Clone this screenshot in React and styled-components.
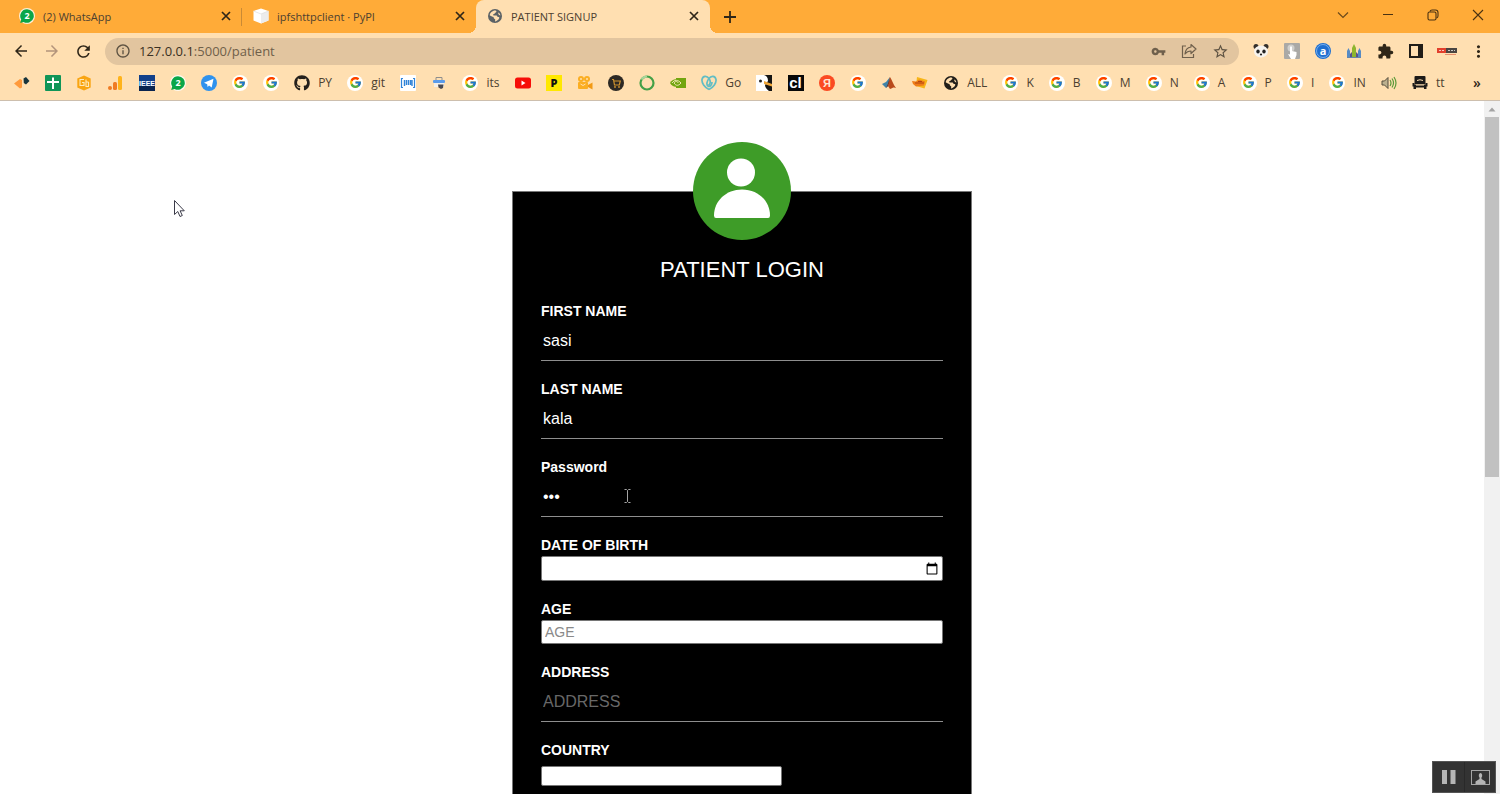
import React from 'react';
import styled, { createGlobalStyle, css } from 'styled-components';
import { FcGoogle } from 'react-icons/fc';
import { FaGithub } from 'react-icons/fa';
import {
  MdArrowBack, MdArrowForward, MdRefresh, MdInfoOutline, MdVpnKey, MdStarBorder,
  MdExtension, MdMoreVert,
} from 'react-icons/md';

const GlobalStyle = createGlobalStyle`
  * { box-sizing: border-box; }
  html, body { margin: 0; background: #fff; overflow: hidden; }
  button { border: 0; padding: 0; margin: 0; background: none; font: inherit; color: inherit; }
`;

const Browser = styled.div`
  display: flex;
  flex-direction: column;
  height: 100vh;
  overflow: hidden;
  font-family: "Open Sans", "Noto Sans", sans-serif;
  font-size: 11px;
  color: #4c4030;
`;

/* Tab strip */
const TabStrip = styled.header`
  display: flex;
  flex: none;
  height: 33px;
  padding-left: 8px;
  background: #ffab38;
`;
const Tab = styled.div`
  position: relative;
  display: flex;
  align-items: center;
  gap: 8px;
  flex: 0 1 234px;
  min-width: 0;
  padding: 0 8px 1px 11px;
  ${(p) => p.$divider && css`
    &::after {
      content: '';
      position: absolute;
      right: 0;
      top: 8px;
      height: 18px;
      border-right: 1px solid #c98a35;
    }
  `}
  ${(p) => p.$active && css`
    background: #ffdfb1;
    border-radius: 8px 8px 0 0;
    &::before, &::after {
      content: '';
      position: absolute;
      bottom: 0;
      width: 8px;
      height: 8px;
    }
    &::before {
      left: -8px;
      background: radial-gradient(circle at 0 0, transparent 8px, #ffdfb1 8px);
    }
    &::after {
      right: -8px;
      background: radial-gradient(circle at 100% 0, transparent 8px, #ffdfb1 8px);
    }
  `}
`;
const TabTitle = styled.span`
  flex: 1;
  overflow: hidden;
  white-space: nowrap;
  text-overflow: ellipsis;
`;
const IconButton = styled.button`
  display: grid;
  place-items: center;
  flex: none;
  width: ${(p) => p.$w || 16}px;
  height: ${(p) => p.$h || 16}px;
  color: ${(p) => p.$color || '#2f2618'};
`;
const NewTab = styled.div`
  display: flex;
  align-items: center;
  flex: 1;
  padding-left: 12px;
`;
const WindowButtons = styled.div`
  display: flex;
  align-items: center;
  height: 30px;
`;

/* Address bar */
const Toolbar = styled.div`
  display: flex;
  align-items: center;
  gap: 12px;
  flex: none;
  height: 35px;
  padding: 1px 12px 0 11px;
  background: #ffdfb1;
`;
const ToolGroup = styled.div`
  display: flex;
  align-items: center;
  gap: 11px;
`;
const AddressBar = styled.div`
  display: flex;
  align-items: center;
  gap: 8px;
  flex: 1;
  min-width: 0;
  height: 27px;
  padding: 0 9px 0 10px;
  border-radius: 14px;
  background: #e2c59f;
`;
const Url = styled.div`
  flex: 1;
  font-size: 13px;
  color: #6f604a;
  white-space: nowrap;
`;
const Host = styled.span`
  color: #3a3023;
`;

/* Bookmarks */
const BookmarkBar = styled.nav`
  display: flex;
  align-items: center;
  flex: none;
  height: 33px;
  padding: 0 16px 3px 14px;
  background: #ffdfb1;
  border-bottom: 1px solid #cdbfae;
`;
const BookmarkList = styled.div`
  display: flex;
  align-items: center;
  justify-content: space-between;
  flex: 1;
  padding-right: 25px;
`;
const Bookmark = styled.a`
  display: flex;
  align-items: center;
  gap: 8px;
  height: 16px;
  font-size: 12px;
  line-height: 16px;
  color: #4c4030;
  text-decoration: none;
  white-space: nowrap;
`;
const More = styled.button`
  width: 14px;
  font-size: 14px;
  font-weight: 600;
  line-height: 16px;
  color: #2f2618;
`;
const GoogleDisc = styled.span`
  display: grid;
  place-items: center;
  width: 16px;
  height: 16px;
  border-radius: 50%;
  background: #fff;
`;
const Art = styled.svg`
  display: block;
  flex: none;
  width: ${(p) => p.$s || 16}px;
  height: ${(p) => p.$s || 16}px;
`;

/* Page */
const Viewport = styled.div`
  display: flex;
  flex: 1;
  min-height: 0;
`;
const Page = styled.main`
  position: relative;
  flex: 1;
  overflow: hidden;
  padding-top: 90px;
  font-family: "Liberation Sans", Arial, sans-serif;
`;
const Card = styled.form`
  display: flex;
  flex-direction: column;
  gap: 20px;
  max-width: 460px;
  margin: 0 auto;
  padding: 0 28px 28px;
  border: 1px solid #777;
  background: #000;
  color: #fff;
`;
const CardHead = styled.div`
  display: flex;
  flex-direction: column;
  align-items: center;
  gap: 17px;
  margin-top: -50px;
`;
const Heading = styled.h1`
  margin: 0;
  font-size: 22px;
  line-height: 26px;
  font-weight: 400;
`;
const Field = styled.div`
  position: relative;
  display: flex;
  flex-direction: column;
`;
const Label = styled.label`
  font-size: 14px;
  line-height: 17px;
  font-weight: 700;
`;
const LineInput = styled.input`
  height: 41px;
  padding: 2px 2px 0;
  border: 0;
  border-bottom: 1px solid #8e8e8e;
  border-radius: 0;
  outline: 0;
  background: transparent;
  color: #fff;
  font: 16px "Liberation Sans", Arial, sans-serif;
  &::placeholder { color: #686868; }
`;
const BoxInput = styled.input`
  width: ${(p) => p.$w || '100%'};
  height: ${(p) => p.$h || 24}px;
  margin-top: ${(p) => p.$top || 2}px;
  padding: 1px 1px 1px 3px;
  border: 1px solid #767676;
  border-radius: 2px;
  outline: 0;
  background: #fff;
  color: #000;
  font: 14px "Liberation Sans", Arial, sans-serif;
  &::placeholder { color: #8a8a8a; }
  &::-webkit-datetime-edit { visibility: hidden; }
`;
const Scrollbar = styled.div`
  display: flex;
  flex-direction: column;
  align-items: center;
  flex: none;
  width: 16px;
  background: #f1f1f1;
`;
const Thumb = styled.div`
  width: 14px;
  height: 52%;
  background: #c1c1c1;
`;
const TextCursor = styled.svg`
  position: absolute;
  left: 83px;
  top: 30px;
  width: 7px;
  height: 14px;
`;
const Pointer = styled.svg`
  position: absolute;
  left: 173px;
  top: 98px;
  width: 12px;
  height: 19px;
`;
const Recorder = styled.div`
  position: fixed;
  right: 4px;
  bottom: 1px;
  display: grid;
  grid-template-columns: 1fr 1fr;
  width: 64px;
  height: 32px;
  border: 1px solid #555;
  background: #333;
`;
const RecorderButton = styled.button`
  display: grid;
  place-items: center;
  & + & { border-left: 1px solid #292929; }
`;

const Google = () => <GoogleDisc><FcGoogle size={13} /></GoogleDisc>;
const WhatsApp = () => (
  <Art viewBox="0 0 16 16">
    <circle cx="8" cy="8" r="8" fill="#fff" opacity=".8" />
    <path d="M8 1.2a6.8 6.8 0 1 1-3.4 12.7L1.2 15l1-3.5A6.8 6.8 0 0 1 8 1.2z" fill="#0aa648" />
    <text x="8" y="11.2" fontSize="9" fontWeight="700" fill="#fff" textAnchor="middle" fontFamily="Open Sans">2</text>
  </Art>
);
const Globe = ({ color, land }) => (
  <Art viewBox="0 0 16 16">
    <circle cx="8" cy="8" r="7" fill={color} />
    <path d="M8.500 2.500c1.500.5 1 1.800-.2 2.200-1 .4-.5 1.500-1.800 1.600-.8.200-.5 1.200.3 1.200h2.700c.8.200.6 1.500 1.500 1.600.9.100 1.600.2 1.200 1.200-.8 1.700-2.300 2.800-4 3.100-.6-.4.6-1.600-.2-2.200-1-.5-1.500-1-1.400-2.200-1.300-.2-3.200-1.200-3.900-1.700C2.900 5 5.500 2.300 8.500 2.500z" fill={land} />
    <path d="M11.500 4.500c1 .8 1.600 1.700 1.900 3-.9-.1-1.600-.7-2-1.500-.2-.6-.2-1 .1-1.500z" fill={land} />
  </Art>
);
const Close = () => (
  <Art viewBox="0 0 10 10" $s={10}><path d="m1 1 8 8M9 1 1 9" stroke="currentColor" strokeWidth="1.700" /></Art>
);

const art = {
  arrows: (
    <Art viewBox="0 0 16 16"><path d="M0 8.500 6 4l2 1v7.500l-2 1z" fill="#ff9a3c" /><path d="M9.500 3.500 12 2l3.500 4L12 9.500 9.800 8z" fill="#17343c" /></Art>
  ),
  sheet: (
    <Art viewBox="0 0 16 16"><rect width="16" height="16" rx="1" fill="#0f9558" /><path d="M7 2.500h2V6h5v2H9v6H7V8H2V6h5z" fill="#fff" /></Art>
  ),
  hexagon: (
    <Art viewBox="0 0 16 16"><path d="M8 .5 14.700 3.500v9L8 15.500l-6.700-3v-9z" fill="#f9a513" /><path d="M8 4.500H4v6h4V7.500H6M12.500 7H10V4.500M10 7v4.500h2.500V7" fill="none" stroke="#ffe9b8" strokeWidth="1.100" /></Art>
  ),
  analytics: (
    <Art viewBox="0 0 16 16"><circle cx="3" cy="13" r="2" fill="#f07b22" /><rect x="6" y="7" width="4" height="8" rx="1.500" fill="#f07b22" /><rect x="11" y="1" width="4" height="14" rx="1.500" fill="#ffb31a" /></Art>
  ),
  ieee: (
    <Art viewBox="0 0 16 16"><rect width="16" height="16" fill="#12408a" /><rect y="11" width="16" height="5" fill="#0a2450" /><text x="8" y="11" fontSize="7" fontWeight="700" fill="#fff" textAnchor="middle" fontFamily="Liberation Sans">IEEE</text></Art>
  ),
  whatsapp: <WhatsApp />,
  telegram: (
    <Art viewBox="0 0 16 16"><circle cx="8" cy="8" r="8" fill="#2f92ee" /><path d="m3 7.800 9.500-4-1.800 8.700-2.700-2-1.400 1.400-.4-2.600z" fill="#fff" /></Art>
  ),
  github: <FaGithub size={16} color="#24201c" />,
  barcode: (
    <Art viewBox="0 0 16 16"><rect width="16" height="16" rx="1" fill="#fff" /><path d="M3 3.500H1.500v9H3M13 3.500h1.500v9H13" fill="none" stroke="#3184d8" strokeWidth="1.200" /><path d="M4.500 5v6M6.500 5v5M8.500 5v5M10.500 5v5M12 5v6" fill="none" stroke="#3184d8" strokeWidth="1.400" /></Art>
  ),
  printer: (
    <Art viewBox="0 0 16 16"><path d="M5 5V2.500h6V5" fill="none" stroke="#8d8d8d" /><rect x="2" y="5" width="12" height="3" rx="1" fill="#5b9bea" /><path d="M3 8h10v4H3z" fill="#f3efe9" /><path d="M7 9.500h5.500L12 13l-2 1-2.500-1.500z" fill="#4a4a52" /></Art>
  ),
  youtube: (
    <Art viewBox="0 0 16 16"><rect y="2.500" width="16" height="11" rx="2.500" fill="#f60d08" /><path d="M6.500 5.500v5l4-2.500z" fill="#fff" /></Art>
  ),
  p: (
    <Art viewBox="0 0 16 16"><rect width="16" height="16" fill="#ffe800" /><text x="8" y="12" fontSize="11" fontWeight="800" fill="#111" textAnchor="middle" fontFamily="Open Sans">P</text></Art>
  ),
  camera: (
    <Art viewBox="0 0 16 16"><circle cx="4" cy="4" r="3" fill="#fbae22" /><circle cx="10" cy="4" r="3" fill="#fbae22" /><rect x="1" y="7" width="10" height="7" rx="1" fill="#fbae22" /><path d="m11 10 4.500-2.500v7L11 12z" fill="#f29a15" /><circle cx="4" cy="4" r="1" fill="#ffdfb1" /><circle cx="10" cy="4" r="1" fill="#ffdfb1" /><path d="M3.500 9q2.500 3 5 0" fill="none" stroke="#ffdfb1" /></Art>
  ),
  cart: (
    <Art viewBox="0 0 16 16"><circle cx="8" cy="8" r="8" fill="#2d2924" /><path d="M4 4.500h1.500l1 5.500h4.800l1-4H6" fill="none" stroke="#cf932f" strokeWidth="1.200" /><circle cx="7" cy="12" r=".9" fill="#cf932f" /><circle cx="11" cy="12" r=".9" fill="#cf932f" /></Art>
  ),
  ring: (
    <Art viewBox="0 0 16 16"><circle cx="8" cy="8" r="6.500" fill="none" stroke="#43a047" strokeWidth="2.200" /><path d="M8 1.500A6.500 6.500 0 0 0 2.500 4.500" stroke="#a8d59a" strokeWidth="2" fill="none" /></Art>
  ),
  nvidia: (
    <Art viewBox="0 0 16 16"><path d="M6 3h10v10H6z" fill="#72a510" /><path d="M0 8c3-5 8-5 11 0-3 5-8 5-11 0z" fill="#72a510" /><path d="M2 8c2.500-3.500 6-3.500 9 0-2.500 3-5 3-7 0 1.500-2 3-2 4.500 0" fill="none" stroke="#f3e9b5" strokeWidth="1" /></Art>
  ),
  godaddy: (
    <Art viewBox="0 0 16 16"><g fill="none" stroke="#62bdc4" strokeWidth="1.700"><path d="M8 14.500C3.500 12.500.5 8 1 4.500 1.800.5 6 .5 8 3.500c2 2.500 1.500 5.500-.5 7" /><path d="M8 14.500c4.500-2 7.500-6.500 7-10C14.200.5 10 .5 8 3.500c-2 2.500-3 6-1 7.500s4-1 4-4" /></g></Art>
  ),
  bird: (
    <Art viewBox="0 0 16 16"><rect width="16" height="16" fill="#151515" /><path d="M0 0h8q4 1 4 6l-3 4q0 3 4 6H0z" fill="#fff" /><path d="m8 6 8 3v2.500L8 9z" fill="#efa638" /><circle cx="4.500" cy="6" r="1.500" fill="#222" /></Art>
  ),
  cl: (
    <Art viewBox="0 0 16 16"><rect width="16" height="16" fill="#080808" /><text x="7.500" y="13" fontSize="15" fontWeight="700" fill="#fff" textAnchor="middle" fontFamily="Liberation Sans">cl</text></Art>
  ),
  yandex: (
    <Art viewBox="0 0 16 16"><circle cx="8" cy="8" r="8" fill="#fb4a22" /><text x="8" y="12" fontSize="11" fontWeight="700" fill="#ffe5d5" textAnchor="middle" fontFamily="Liberation Sans">Я</text></Art>
  ),
  matlab: (
    <Art viewBox="0 0 16 16"><path d="m1 9 4-2 4-5-2 9-2 2z" fill="#3f83a8" /><path d="M9 2c2 3 3.500 8 6 11-2-1-3-.5-6 1l-2-3z" fill="#b94a1c" /><path d="M9 2 8 8l-1 3-2 2c2-3 2.500-7 4-11z" fill="#6b2b20" /></Art>
  ),
  ticket: (
    <Art viewBox="0 0 16 16"><path d="m5 2 10.500 3-3 8.500L4 11z" fill="#f7b518" /><path d="m0 6 4 .5 3-2 6 2-1 4-8 1-3-2.500z" fill="#f07d17" /><path d="M3 8h9M6 6.500h4" stroke="#b34511" strokeWidth="1" /></Art>
  ),
  globe: <Globe color="#211e1a" land="#ffdfb1" />,
  speaker: (
    <Art viewBox="0 0 16 16"><path d="M1 6h2.500L7 2.500v11L3.500 10H1z" fill="#bbb08f" stroke="#554c3c" strokeWidth="1" /><path d="M9 5q2 3 0 6M11 3.500q3 4.500 0 9M13 2q4 6 0 12" fill="none" stroke="#5b9a3a" strokeWidth="1.200" /></Art>
  ),
  train: (
    <Art viewBox="0 0 16 16"><path d="M3.500 1h9q1 0 1 1v7h-11V2q0-1 1-1z" fill="#1c1a18" /><path d="M5 5.500q3-1.500 6 0" fill="none" stroke="#ffdfb1" strokeWidth="1" /><path d="M.5 8h2v1.500h11V8h2v3.500h-1V14H12v-1.500H4V14H1.500v-2.500h-1z" fill="#1c1a18" /><path d="M4 10h8" stroke="#ffdfb1" strokeWidth="1" /></Art>
  ),
  google: <Google />,
};

const bookmarks = [
  ['arrows'], ['sheet'], ['hexagon'], ['analytics'], ['ieee'], ['whatsapp'], ['telegram'],
  ['google'], ['google'], ['github', 'PY'], ['google', 'git'], ['barcode'], ['printer'],
  ['google', 'its'], ['youtube'], ['p'], ['camera'], ['cart'], ['ring'], ['nvidia'],
  ['godaddy', 'Go'], ['bird'], ['cl'], ['yandex'], ['google'], ['matlab'], ['ticket'],
  ['globe', 'ALL'], ['google', 'K'], ['google', 'B'], ['google', 'M'], ['google', 'N'],
  ['google', 'A'], ['google', 'P'], ['google', 'I'], ['google', 'IN'], ['speaker'], ['train', 'tt'],
];

const Cube = () => (
  <Art viewBox="0 0 16 16"><path d="M8 .5 15.500 3v9.500L8 15.500.5 12.500V3z" fill="#fff" /><path d="M8 6v9.500l7.500-3V3z" fill="#ececec" /><path d="M.5 3 8 6l7.500-3" fill="none" stroke="#ddd" strokeWidth=".7" /></Art>
);
const Share = () => (
  <Art viewBox="0 0 16 16"><path d="M5 3H1.500v11.500h11V11" fill="none" stroke="#6f604c" strokeWidth="1.200" /><path d="M10 1.500 15 6l-5 4.500V8C7.500 8 5.500 9 4 11c.3-4 2.500-6.500 6-7z" fill="none" stroke="#6f604c" strokeWidth="1.200" strokeLinejoin="round" /></Art>
);

const extensions = [
  ['Panda', <Art viewBox="0 0 16 16"><circle cx="3" cy="3.500" r="2.500" fill="#332f2b" /><circle cx="13" cy="3.500" r="2.500" fill="#332f2b" /><ellipse cx="8" cy="8.500" rx="7" ry="6" fill="#f6f3ee" /><ellipse cx="5" cy="8.500" rx="1.700" ry="2" fill="#222" /><ellipse cx="11" cy="8.500" rx="1.700" ry="2" fill="#222" /><circle cx="8" cy="11.500" r="1.100" fill="#222" /></Art>],
  ['Touch', <Art viewBox="0 0 16 16"><rect width="16" height="16" rx="1" fill="#aaa9a6" /><circle cx="7" cy="5" r="3.500" fill="#d1d0cd" /><path d="M6 4q1-1.500 2 0v4l4.500 1v3l-1.500 4H7l-3-5 2 .5z" fill="#fff" /></Art>],
  ['Alpha', <Art viewBox="0 0 16 16"><circle cx="8" cy="8" r="8" fill="#1f6fd0" /><circle cx="8" cy="8" r="6.500" fill="none" stroke="#8fc0f4" strokeWidth=".8" /><text x="8" y="11.500" fontSize="11" fontWeight="700" fill="#fff" textAnchor="middle" fontFamily="Open Sans">a</text></Art>],
  ['Towers', <Art viewBox="0 0 16 16"><path d="M1 14V8l1.500-3L4 8v6zM12 14V8l1.500-3L15 8v6z" fill="#568bc4" /><path d="M6 14V5l2-4 2 4v9z" fill="#8db52e" /><path d="M4 14v-3l2-2v5zM10 14V9l2 2v3z" fill="#58508f" /><path d="M1 14.500h14" stroke="#6684a8" strokeWidth="1" /></Art>],
  ['Extensions', <MdExtension size={17} />],
  ['Side panel', <Art viewBox="0 0 16 16"><rect x="2" y="2" width="12" height="12" fill="none" stroke="#211d18" strokeWidth="2" /><path d="M10 2h4v12h-4z" fill="#211d18" /></Art>],
];

export default function App() {
  return (
    <Browser>
      <GlobalStyle />
      <TabStrip>
        <Tab $divider>
          <WhatsApp />
          <TabTitle>(2) WhatsApp</TabTitle>
          <IconButton aria-label="Close tab"><Close /></IconButton>
        </Tab>
        <Tab>
          <Cube />
          <TabTitle>ipfshttpclient · PyPI</TabTitle>
          <IconButton aria-label="Close tab"><Close /></IconButton>
        </Tab>
        <Tab $active>
          <Globe color="#5b6266" land="#ffdfb1" />
          <TabTitle>PATIENT SIGNUP</TabTitle>
          <IconButton aria-label="Close tab"><Close /></IconButton>
        </Tab>
        <NewTab>
          <IconButton aria-label="New tab">
            <Art viewBox="0 0 12 12" $s={12}><path d="M6 0v12M0 6h12" stroke="currentColor" strokeWidth="1.800" /></Art>
          </IconButton>
        </NewTab>
        <WindowButtons>
          <IconButton $w={45} $h={30} $color="#6b4a1c" aria-label="Search tabs">
            <Art viewBox="0 0 12 12" $s={12}><path d="m1 3.500 5 5 5-5" fill="none" stroke="currentColor" strokeWidth="1.200" /></Art>
          </IconButton>
          <IconButton $w={45} $h={30} $color="#4a3212" aria-label="Minimize">
            <Art viewBox="0 0 12 12" $s={12}><path d="M1 5.500h10" stroke="currentColor" /></Art>
          </IconButton>
          <IconButton $w={45} $h={30} $color="#4a3212" aria-label="Restore">
            <Art viewBox="0 0 12 12" $s={12}><g fill="none" stroke="currentColor" strokeWidth="1.100"><rect x="1" y="3" width="8" height="8" rx="1.500" /><path d="M3 2.500Q3.500 1 5 1h3.500Q11 1 11 3.500V7q0 1.500-1.500 2" /></g></Art>
          </IconButton>
          <IconButton $w={45} $h={30} $color="#4a3212" aria-label="Close window">
            <Art viewBox="0 0 12 12" $s={12}><path d="m1 1 10 10M11 1 1 11" stroke="currentColor" strokeWidth="1.100" /></Art>
          </IconButton>
        </WindowButtons>
      </TabStrip>

      <Toolbar>
        <ToolGroup>
          <IconButton $w={20} $h={20} aria-label="Back"><MdArrowBack size={18} /></IconButton>
          <IconButton $w={20} $h={20} $color="#b3947b" aria-label="Forward"><MdArrowForward size={18} /></IconButton>
          <IconButton $w={20} $h={20} aria-label="Reload"><MdRefresh size={19} /></IconButton>
        </ToolGroup>
        <AddressBar>
          <MdInfoOutline size={16} color="#5d5242" />
          <Url><Host>127.0.0.1</Host>:5000/patient</Url>
          <ToolGroup>
            <IconButton $w={20} $h={20} $color="#6f604c" aria-label="Passwords"><MdVpnKey size={15} /></IconButton>
            <IconButton $w={20} $h={20} aria-label="Share"><Share /></IconButton>
            <IconButton $w={20} $h={20} $color="#5d5242" aria-label="Bookmark page"><MdStarBorder size={17} /></IconButton>
          </ToolGroup>
        </AddressBar>
        <ToolGroup>
          {extensions.map(([name, icon]) => (
            <IconButton key={name} $w={20} $h={20} aria-label={name}>{icon}</IconButton>
          ))}
          <IconButton $w={20} $h={20} aria-label="Recorder">
            <svg width="20" height="10" viewBox="0 0 20 10">
              <rect y="2" width="10" height="5" fill="#e2402c" />
              <rect x="9" y="2" width="11" height="5" fill="#4a4542" />
              <path d="M2 4.500h6M11 4.500h7" stroke="#fff" strokeDasharray="2 1" opacity=".7" />
              <path d="M8 8.500h11" stroke="#e58d6c" />
            </svg>
          </IconButton>
          <IconButton $w={20} $h={20} aria-label="Menu"><MdMoreVert size={19} /></IconButton>
        </ToolGroup>
      </Toolbar>

      <BookmarkBar>
        <BookmarkList>
          {bookmarks.map(([icon, label], i) => (
            <Bookmark key={i} href="#" aria-label={label || icon}>
              {art[icon]}
              {label}
            </Bookmark>
          ))}
        </BookmarkList>
        <More aria-label="More bookmarks">»</More>
      </BookmarkBar>

      <Viewport>
        <Page>
          <Card>
            <CardHead>
              <Art viewBox="0 0 98 98" $s={98}>
                <circle cx="49" cy="49" r="49" fill="#3e9c28" />
                <circle cx="48" cy="30.500" r="14" fill="#fff" />
                <path d="M21 73.500C21 59 33 47.500 49 47.500S77 59 77 73.500Q77 76 75 76H23Q21 76 21 73.500z" fill="#fff" />
              </Art>
              <Heading>PATIENT LOGIN</Heading>
            </CardHead>
            <Field>
              <Label htmlFor="first">FIRST NAME</Label>
              <LineInput id="first" defaultValue="sasi" />
            </Field>
            <Field>
              <Label htmlFor="last">LAST NAME</Label>
              <LineInput id="last" defaultValue="kala" />
            </Field>
            <Field>
              <Label htmlFor="password">Password</Label>
              <LineInput id="password" type="password" defaultValue="123" />
              <TextCursor viewBox="0 0 7 14">
                <path d="M.5.5h2L3.500 1.500 4.500.5h2M3.500 1.500v11M.5 13.500h2l1-1 1 1h2" fill="none" stroke="#a5a5a5" />
              </TextCursor>
            </Field>
            <Field>
              <Label htmlFor="dob">DATE OF BIRTH</Label>
              <BoxInput id="dob" type="date" $h={25} />
            </Field>
            <Field>
              <Label htmlFor="age">AGE</Label>
              <BoxInput id="age" placeholder="AGE" />
            </Field>
            <Field>
              <Label htmlFor="address">ADDRESS</Label>
              <LineInput id="address" placeholder="ADDRESS" />
            </Field>
            <Field>
              <Label htmlFor="country">COUNTRY</Label>
              <BoxInput id="country" $w="60%" $h={20} $top={7} />
            </Field>
          </Card>
          <Pointer viewBox="0 0 12 19">
            <path d="M1.500 1.500v14l3.300-3 2.200 5 2.300-1-2.200-4.700h4.200z" fill="#fff" stroke="#3a3a48" />
          </Pointer>
        </Page>
        <Scrollbar>
          <Art viewBox="0 0 16 16"><path d="m4.500 10.500 3.500-4 3.500 4z" fill="#a3a3a3" /></Art>
          <Thumb />
        </Scrollbar>
      </Viewport>

      <Recorder>
        <RecorderButton aria-label="Pause">
          <Art viewBox="0 0 16 16"><path d="M1 1h5v14H1zM9.500 1h5v14h-5z" fill="#b5b5b5" /></Art>
        </RecorderButton>
        <RecorderButton aria-label="Webcam">
          <svg width="19" height="15" viewBox="0 0 19 15">
            <rect x=".5" y=".5" width="18" height="14" fill="none" stroke="#a5a5a5" />
            <path d="M9.500 3a1.800 2.500 0 0 1 1 4.500V9l4 2.500V14h-10v-2.500l4-2.500V7.500a1.800 2.500 0 0 1 1-4.500z" fill="#b5b5b5" />
          </svg>
        </RecorderButton>
      </Recorder>
    </Browser>
  );
}
